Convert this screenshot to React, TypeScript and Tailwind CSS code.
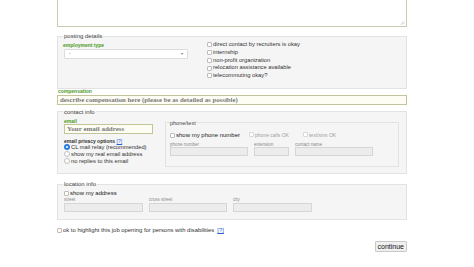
import React from "react";

function Cb({ dim }: { dim?: boolean }) {
  return (
    <span
      className={
        "inline-block w-[5px] h-[5px] border bg-white rounded-[1px] shrink-0 " +
        (dim ? "border-[#d8d8d8]" : "border-[#bdbdbd]")
      }
    />
  );
}

function Radio({ on }: { on?: boolean }) {
  return on ? (
    <span className="flex items-center justify-center w-[6px] h-[6px] rounded-full bg-[#2a7de1] shrink-0">
      <span className="w-[2px] h-[2px] rounded-full bg-white" />
    </span>
  ) : (
    <span className="inline-block w-[6px] h-[6px] rounded-full border border-[#c0c0c0] bg-white shrink-0" />
  );
}

function Lbl({ children }: { children: React.ReactNode }) {
  return <div className="text-[4.5px] leading-[5px] text-[#8a8a8a]">{children}</div>;
}

function DisInput({ w }: { w: string }) {
  return <div className={"h-[9px] border border-[#d6d6d6] bg-[#ececec] " + w} />;
}

export default function App() {
  return (
    <div className="w-[474px] h-[267px] bg-white overflow-hidden font-['Liberation_Sans',Arial,sans-serif] text-[#333]">
      <div className="ml-[57px] w-[350px]">
        {/* textarea bottom */}
        <div className="h-[27px] border-x border-b border-[#c9c9b2] bg-white flex justify-end items-end">
          <svg width="5" height="5" viewBox="0 0 5 5" className="mb-[1px] mr-[1px]">
            <path d="M4.5 1 L1 4.5 M4.5 3 L3 4.5" stroke="#aaa" strokeWidth="0.6" />
          </svg>
        </div>

        {/* posting details */}
        <fieldset className="mt-[6px] border border-[#e2e2e2] bg-[#f5f5f5] px-[5px] pb-[8px]">
          <legend className="text-[6px] leading-[6px] text-[#444] px-[1px]">posting details</legend>
          <div className="flex">
            <div className="w-[144px] pt-[4px]">
              <div className="text-[5px] leading-[5px] font-bold text-[#4c9a1c]">employment type</div>
              <div className="mt-[1px] ml-[1px] w-[124px] h-[10px] border border-[#dcdcdc] bg-white rounded-[1px] flex items-center justify-between px-[4px] text-[5px] text-[#555]">
                <span>-</span>
                <span className="text-[4px] text-[#777]">▾</span>
              </div>
            </div>
            <div className="pt-[2px] flex flex-col text-[5.75px] text-[#333]">
              {[
                "direct contact by recruiters is okay",
                "internship",
                "non-profit organization",
                "relocation assistance available",
                "telecommuting okay?",
              ].map((t) => (
                <div key={t} className="flex items-center gap-[1px] h-[7.75px] leading-[7.75px]">
                  <Cb />
                  <span>{t}</span>
                </div>
              ))}
            </div>
          </div>
        </fieldset>

        {/* compensation */}
        <div className="mt-[0px] text-[5px] leading-[5px] font-bold text-[#4c9a1c] ml-[1px]">compensation</div>
        <div className="mt-[1px] h-[10px] border border-[#c4c49a] bg-[#fdfdf3] flex items-center px-[2px] font-['Liberation_Serif',serif] font-bold text-[6.8px] text-[#7a7a7a]">
          describe compensation here (please be as detailed as possible)
        </div>

        {/* contact info */}
        <fieldset className="mt-[4px] border border-[#e2e2e2] bg-[#f5f5f5] px-[5px] pb-[6px]">
          <legend className="text-[6px] leading-[6px] text-[#444] px-[1px]">contact info</legend>
          <div className="flex">
            <div className="w-[102px] pl-[1px] pt-[4px]">
              <div className="text-[5px] leading-[5px] font-bold text-[#4c9a1c]">email</div>
              <div className="w-[89px] h-[10px] border border-[#c4c49a] bg-[#fdfdf3] flex items-center px-[2px] font-['Liberation_Serif',serif] font-bold text-[7px] text-[#7a7a7a]">
                Your email address
              </div>
              <div className="mt-[4px] text-[5px] leading-[6px] font-bold text-[#333]">
                email privacy options <span className="text-[#2a5bd7] font-normal underline">[?]</span>
              </div>
              <div className="flex flex-col text-[5.75px]">
                {[
                  ["CL mail relay (recommended)", true],
                  ["show my real email address", false],
                  ["no replies to this email", false],
                ].map(([t, on]) => (
                  <div key={t as string} className="flex items-center gap-[1px] h-[7px] leading-[7px]">
                    <Radio on={on as boolean} />
                    <span>{t as string}</span>
                  </div>
                ))}
              </div>
            </div>
            <fieldset className="mt-[5px] w-[234px] border border-[#e2e2e2] px-[4px] pb-[10px]">
              <legend className="text-[5.5px] leading-[6px] text-[#444] px-[0px]">phone/text</legend>
              <div className="mt-[6px] flex items-center h-[8px] text-[6px]">
                <Cb />
                <span className="ml-[1px] text-[#222]">show my phone number</span>
                <span className="ml-[9px]"><Cb dim /></span>
                <span className="ml-[1px] text-[5px] text-[#a0a0a0]">phone calls OK</span>
                <span className="ml-[14px]"><Cb dim /></span>
                <span className="ml-[1px] text-[5px] text-[#a0a0a0]">text/sms OK</span>
              </div>
              <div className="mt-[2px] flex gap-[6px]">
                <div>
                  <Lbl>phone number</Lbl>
                  <div className="mt-[0.5px]"><DisInput w="w-[78px]" /></div>
                </div>
                <div>
                  <Lbl>extension</Lbl>
                  <div className="mt-[0.5px]"><DisInput w="w-[35px]" /></div>
                </div>
                <div>
                  <Lbl>contact name</Lbl>
                  <div className="mt-[0.5px]"><DisInput w="w-[78px]" /></div>
                </div>
              </div>
            </fieldset>
          </div>
        </fieldset>

        {/* location info */}
        <fieldset className="mt-[7px] border border-[#e2e2e2] bg-[#f5f5f5] px-[5px] pb-[7px]">
          <legend className="text-[6px] leading-[6px] text-[#444] px-[1px]">location info</legend>
          <div className="pl-[1px] pt-[2px]">
            <div className="flex items-center gap-[1px] h-[8px] text-[6px] text-[#222]">
              <Cb />
              <span>show my address</span>
            </div>
            <div className="flex gap-[6px]">
              <div>
                <Lbl>street</Lbl>
                <div className="mt-[1px]"><DisInput w="w-[79px]" /></div>
              </div>
              <div>
                <Lbl>cross street</Lbl>
                <div className="mt-[1px]"><DisInput w="w-[78px]" /></div>
              </div>
              <div>
                <Lbl>city</Lbl>
                <div className="mt-[1px]"><DisInput w="w-[79px]" /></div>
              </div>
            </div>
          </div>
        </fieldset>

        {/* disabilities */}
        <div className="mt-[7px] flex items-center h-[6px] text-[5.9px] text-[#333]">
          <Cb />
          <span className="ml-[1px]">ok to highlight this job opening for persons with disabilities</span>
          <span className="ml-[3px] text-[#2a5bd7] underline">[?]</span>
        </div>

        {/* continue */}
        <div className="mt-[8px] flex justify-end">
          <div className="h-[11px] px-[2px] border border-[#c8c8c8] bg-[#f0f0f0] rounded-[1px] flex items-center text-[7px] text-[#111]">
            continue
          </div>
        </div>
      </div>
    </div>
  );
}
